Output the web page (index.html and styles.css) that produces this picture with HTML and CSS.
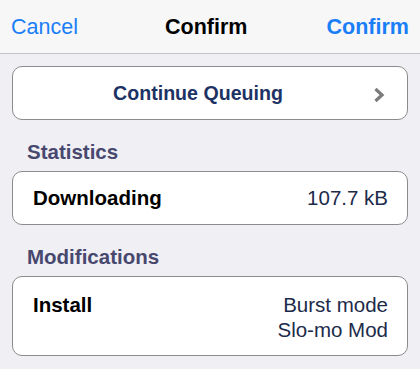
FILE: index.html
```html
<!DOCTYPE html>
<html>
<head>
<meta charset="utf-8">
<link rel="stylesheet" href="styles.css">
</head>
<body>
<header class="nav">
  <span class="nav-btn">Cancel</span>
  <span class="nav-title">Confirm</span>
  <span class="nav-btn nav-strong">Confirm</span>
</header>
<main class="content">
  <div class="card action">
    <span class="action-label">Continue Queuing</span>
    <svg class="chevron" width="12" height="16" viewBox="0 0 12 16"><path d="M2.5 2 L9 8 L2.5 14" fill="none" stroke="#7b7b7b" stroke-width="3.2"/></svg>
  </div>
  <h2 class="section">Statistics</h2>
  <div class="card row">
    <span class="row-key">Downloading</span>
    <span class="row-val">107.7 kB</span>
  </div>
  <h2 class="section">Modifications</h2>
  <div class="card row multi">
    <span class="row-key">Install</span>
    <span class="row-val list"><span>Burst mode</span><span>Slo-mo Mod</span></span>
  </div>
</main>
</body>
</html>
```
FILE: styles.css
```css
html, body {
  margin: 0;
  padding: 0;
}
body {
  background: #efeff4;
  font-family: "Liberation Sans", Arial, sans-serif;
  width: 420px;
  height: 369px;
  overflow: hidden;
}
.nav {
  height: 54px;
  box-sizing: border-box;
  background: #f7f7f8;
  border-bottom: 1px solid #c4c4c8;
  display: flex;
  align-items: center;
  justify-content: space-between;
  padding: 2px 11px 0 11px;
  font-size: 21.5px;
}
.nav-btn {
  color: #1a7ef6;
}
.nav-strong {
  font-weight: bold;
}
.nav-title {
  font-weight: bold;
  color: #000;
  margin-left: 8px;
}
.content {
  padding: 12px 12px 0 12px;
}
.card {
  background: #fff;
  border: 1px solid #8c8c8e;
  border-radius: 10px;
  box-sizing: border-box;
}
.action {
  height: 54px;
  display: flex;
  align-items: center;
  justify-content: center;
  position: relative;
}
.action-label {
  font-weight: bold;
  font-size: 19.6px;
  color: #1d3264;
  margin-left: -24px;
}
.chevron {
  position: absolute;
  right: 22px;
  top: 20px;
}
.section {
  margin: 0;
  font-size: 20.5px;
  font-weight: bold;
  color: #48486f;
  padding: 20px 0 0 15px;
  height: 31px;
  line-height: 24px;
  box-sizing: content-box;
}
.row {
  display: flex;
  justify-content: space-between;
  align-items: center;
  height: 54px;
  padding: 0 19px 0 20px;
  font-size: 20.5px;
}
.row-key {
  font-weight: bold;
  color: #000;
}
.row-val {
  color: #1c2b4a;
}
.multi {
  height: 80px;
  align-items: flex-start;
  padding-top: 15px;
  line-height: 25px;
}
.list {
  display: flex;
  flex-direction: column;
  align-items: flex-end;
}
```
